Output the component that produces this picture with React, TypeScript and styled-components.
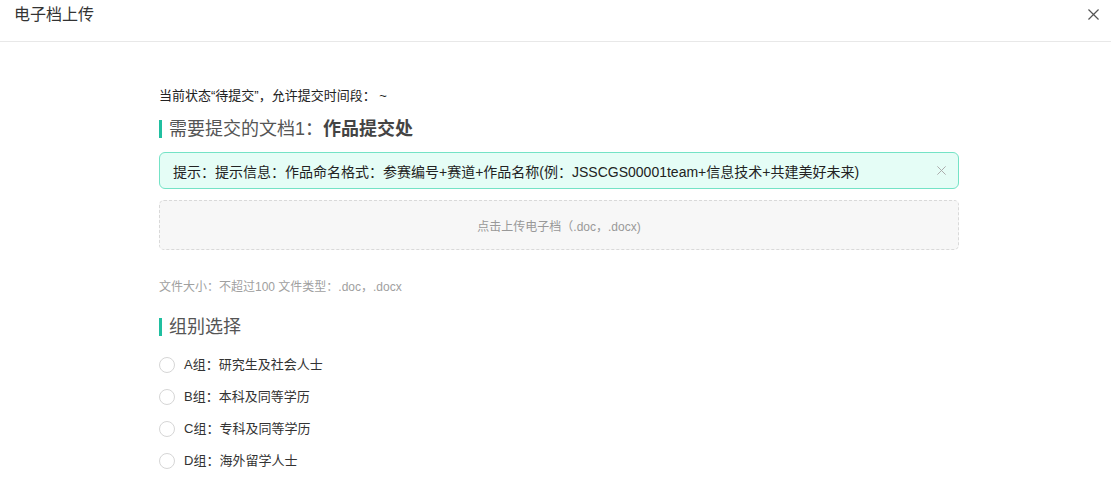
import React, { useState } from "react";
import styled, { createGlobalStyle } from "styled-components";

const GlobalStyle = createGlobalStyle`
  html, body {
    margin: 0;
    padding: 0;
    background: #fff;
    font-family: "Liberation Sans", Arial, "Noto Sans CJK SC", sans-serif;
    color: #333;
  }
`;

const accent = "#20bfa0";

const Header = styled.div`
  height: 42px;
  border-bottom: 1px solid #e8e8e8;
  display: flex;
  align-items: flex-start;
  justify-content: space-between;
  padding: 5px 12px 0 14px;
  box-sizing: border-box;
`;

const Title = styled.span`
  font-size: 16px;
  line-height: 20px;
  color: #333;
`;

const CloseBtn = styled.button<{ $top?: number }>`
  border: none;
  background: none;
  padding: 0;
  margin-top: ${(p) => p.$top ?? 0}px;
  cursor: pointer;
  display: flex;
  align-items: center;
  justify-content: center;
`;

const Body = styled.div`
  width: 800px;
  margin-left: 159px;
  padding-top: 45px;
`;

const Status = styled.div`
  font-size: 13px;
  color: #222;
  line-height: 18px;
`;

const SectionTitle = styled.div<{ $top: number }>`
  display: flex;
  align-items: center;
  margin-top: ${(p) => p.$top}px;
  font-size: 18px;
  color: #555;
  line-height: 22px;
  &::before {
    content: "";
    width: 3px;
    height: 18px;
    background: ${accent};
    margin-right: 7px;
  }
  b {
    color: #444;
    font-weight: bold;
  }
`;

const Alert = styled.div`
  margin-top: 12px;
  height: 37px;
  box-sizing: border-box;
  border: 1px solid #74e3c6;
  background: #e5fdf6;
  border-radius: 6px;
  display: flex;
  align-items: center;
  justify-content: space-between;
  padding: 0 12px 0 13px;
  font-size: 14px;
  color: #222;
`;

const Upload = styled.div`
  margin-top: 11px;
  height: 50px;
  box-sizing: border-box;
  border: 1px dashed #d9d9d9;
  background: #f7f7f7;
  border-radius: 5px;
  display: flex;
  align-items: center;
  justify-content: center;
  font-size: 12px;
  color: #999;
  cursor: pointer;
`;

const Hint = styled.div`
  margin-top: 29px;
  font-size: 12px;
  color: #a0a0a0;
  line-height: 16px;
`;

const RadioList = styled.div`
  margin-top: 18px;
  display: flex;
  flex-direction: column;
  gap: 14px;
`;

const RadioRow = styled.label`
  display: flex;
  align-items: center;
  font-size: 13px;
  color: #333;
  line-height: 18px;
  cursor: pointer;
`;

const Circle = styled.span<{ $on: boolean }>`
  width: 14px;
  height: 14px;
  border-radius: 50%;
  border: 1px solid ${(p) => (p.$on ? accent : "#d6d6d6")};
  margin-right: 9px;
  display: flex;
  align-items: center;
  justify-content: center;
  &::after {
    content: "";
    width: 6px;
    height: 6px;
    border-radius: 50%;
    background: ${(p) => (p.$on ? accent : "transparent")};
  }
`;

const X = ({ size, color }: { size: number; color: string }) => (
  <svg width={size} height={size} viewBox="0 0 12 12">
    <path d="M0.5 0.5L11.5 11.5M11.5 0.5L0.5 11.5" stroke={color} strokeWidth="1.3" fill="none" />
  </svg>
);

const groups = [
  "A组：研究生及社会人士",
  "B组：本科及同等学历",
  "C组：专科及同等学历",
  "D组：海外留学人士",
];

export default function App() {
  const [picked, setPicked] = useState(-1);
  const [showAlert, setShowAlert] = useState(true);

  return (
    <>
      <GlobalStyle />
      <Header>
        <Title>电子档上传</Title>
        <CloseBtn $top={4}>
          <X size={11} color="#555" />
        </CloseBtn>
      </Header>
      <Body>
        <Status>当前状态“待提交”，允许提交时间段： ~</Status>
        <SectionTitle $top={13}>
          需要提交的文档1：<b>作品提交处</b>
        </SectionTitle>
        {showAlert && (
          <Alert>
            <span>
              提示：提示信息：作品命名格式：参赛编号+赛道+作品名称(例：JSSCGS00001team+信息技术+共建美好未来)
            </span>
            <CloseBtn onClick={() => setShowAlert(false)}>
              <X size={9} color="#aaa" />
            </CloseBtn>
          </Alert>
        )}
        <Upload>点击上传电子档（.doc，.docx)</Upload>
        <Hint>文件大小：不超过100 文件类型：.doc，.docx</Hint>
        <SectionTitle $top={21}>组别选择</SectionTitle>
        <RadioList>
          {groups.map((g, i) => (
            <RadioRow key={g} onClick={() => setPicked(i)}>
              <Circle $on={picked === i} />
              {g}
            </RadioRow>
          ))}
        </RadioList>
      </Body>
    </>
  );
}
